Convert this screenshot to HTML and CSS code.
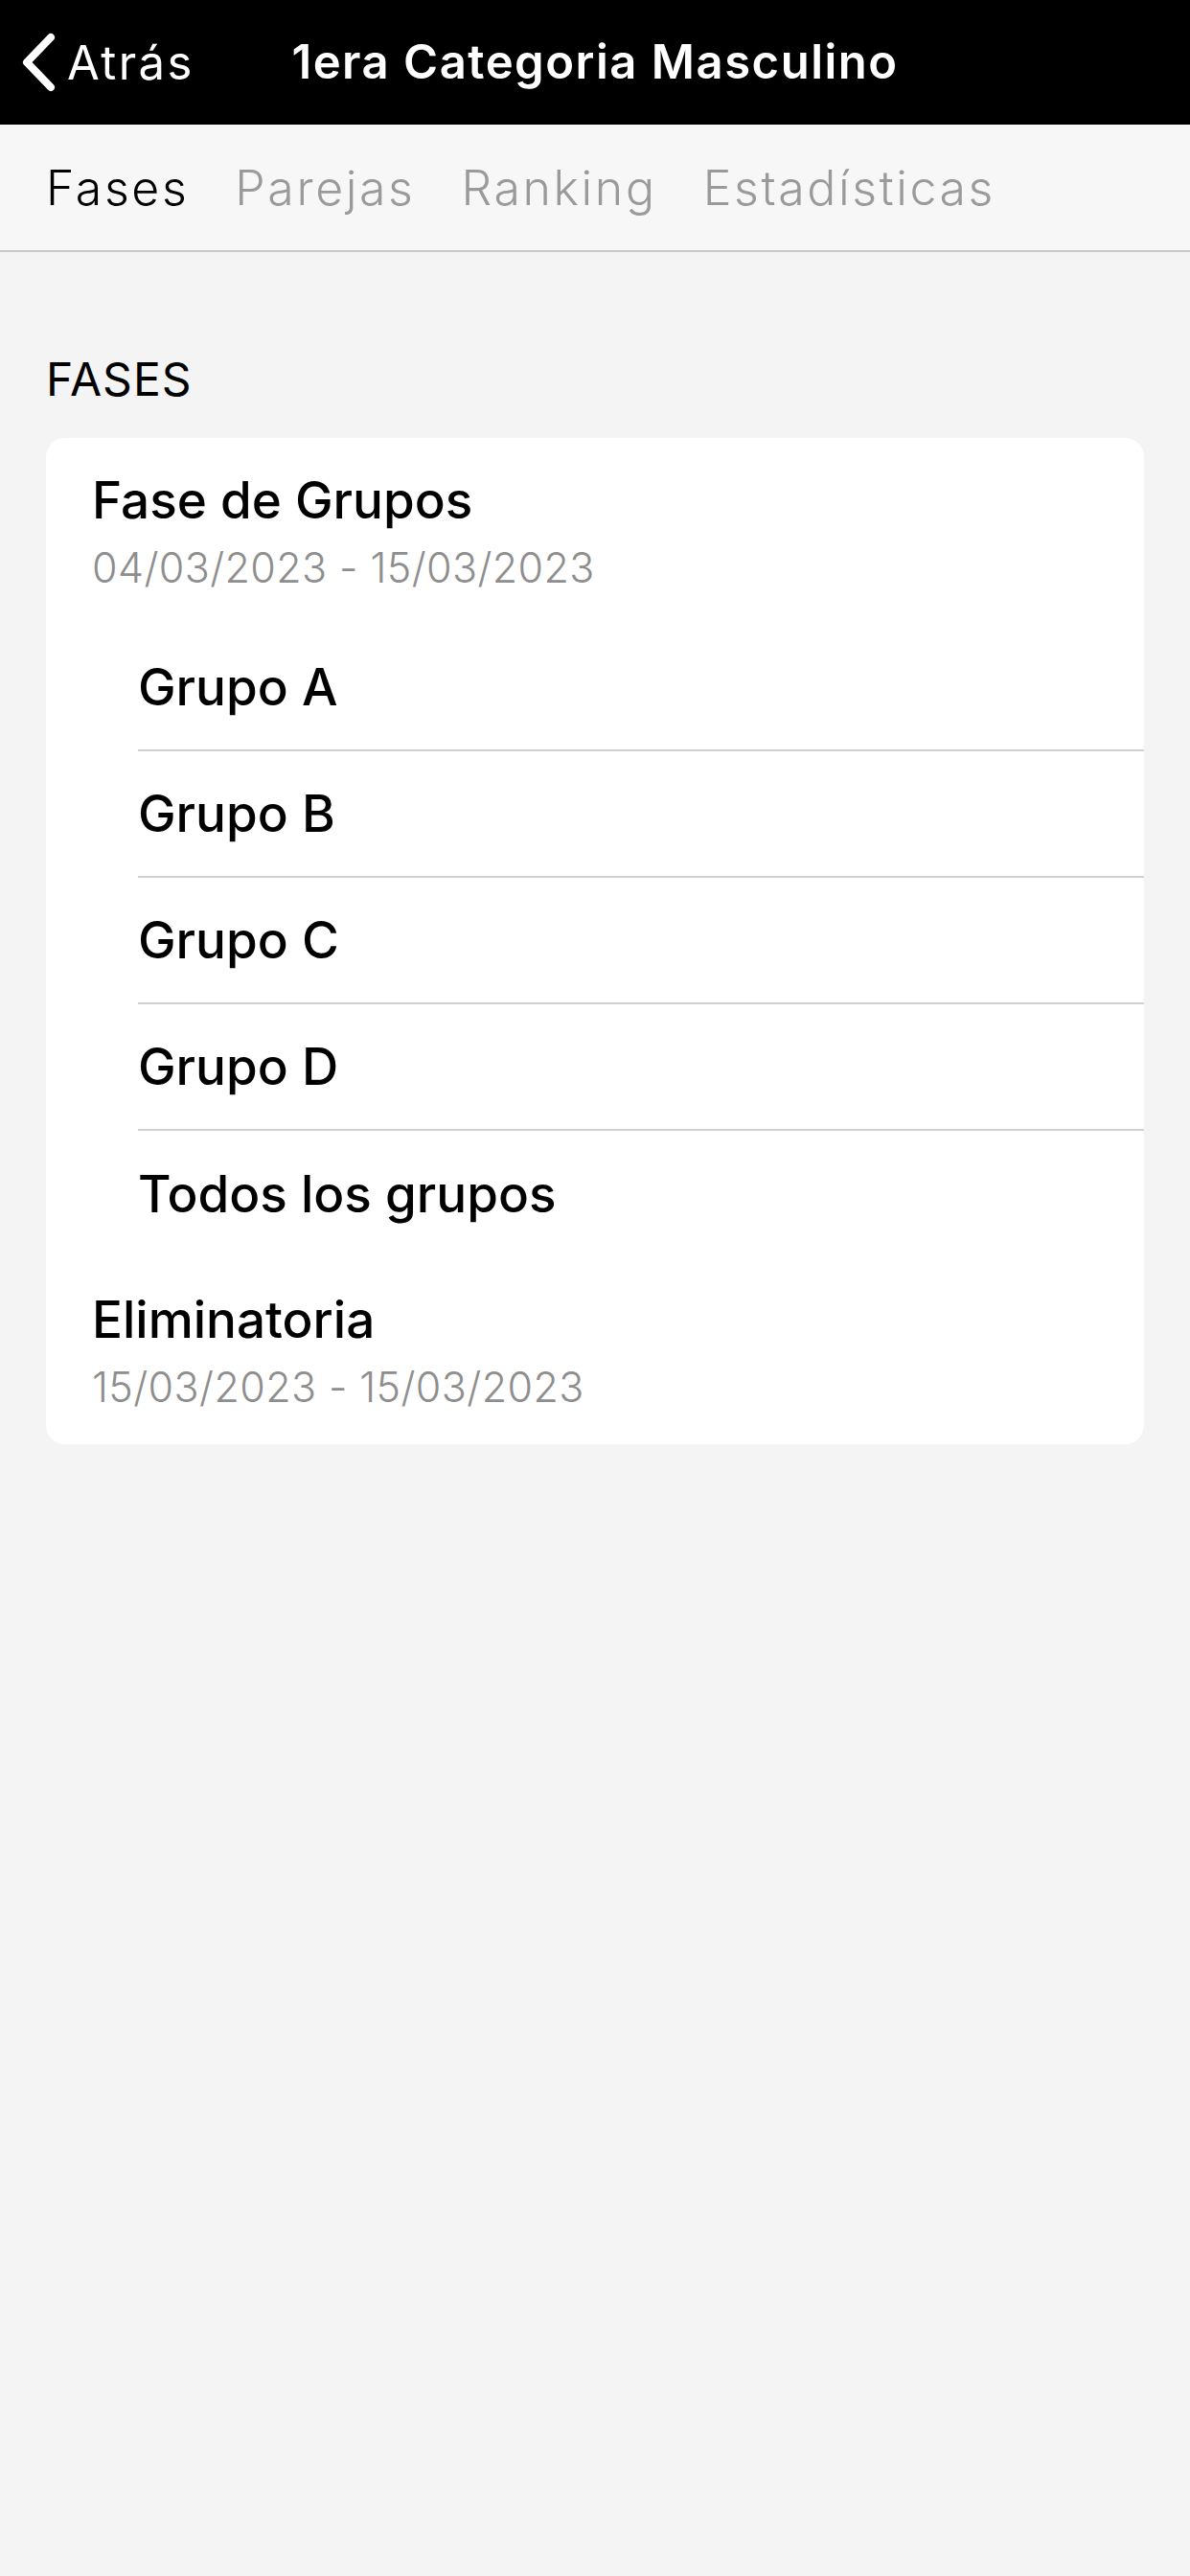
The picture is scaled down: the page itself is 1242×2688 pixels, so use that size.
FILE: index.html
```html
<!DOCTYPE html>
<html lang="es">
<head>
  <meta charset="UTF-8" />
  <meta name="viewport" content="width=device-width, initial-scale=1.0"/>
  <title>1era Categoria Masculino</title>
  <link rel="stylesheet" href="styles.css">
</head>
<body>

  <header class="nav-bar">
    <a class="back-btn" href="#">
      <svg class="chevron" width="36" height="62" viewBox="0 0 36 62">
        <path d="M31 5 L6 31 L31 57" fill="none" stroke="#fff" stroke-width="8" stroke-linecap="round" stroke-linejoin="round"/>
      </svg>
      <span>Atrás</span>
    </a>
    <h1 class="nav-title">1era Categoria Masculino</h1>
    <div></div>
  </header>

  <nav class="tabs">
    <span class="tab active">Fases</span>
    <span class="tab">Parejas</span>
    <span class="tab">Ranking</span>
    <span class="tab">Estadísticas</span>
  </nav>

  <main class="content">
    <h2 class="section-label">FASES</h2>

    <div class="card">
      <div class="phase">
        <div class="phase-name">Fase de Grupos</div>
        <div class="phase-dates">04/03/2023 - 15/03/2023</div>
      </div>
      <ul class="group-list">
        <li class="group">Grupo A</li>
        <li class="group">Grupo B</li>
        <li class="group">Grupo C</li>
        <li class="group">Grupo D</li>
        <li class="group">Todos los grupos</li>
      </ul>
      <div class="phase">
        <div class="phase-name">Eliminatoria</div>
        <div class="phase-dates">15/03/2023 - 15/03/2023</div>
      </div>
    </div>
  </main>

</body>
</html>
```

FILE: styles.css
```css
:root {
  --bg-color: #f4f4f4;
  --tab-bg: #f7f7f7;
  --line: #d2d2d2;
  --muted: #8e8e8e;
}

body {
  font-family: 'Inter', 'Noto Sans', sans-serif;
  background-color: var(--bg-color);
  color: #000;
  margin: 0;
  min-height: 2688px;
}

.nav-bar {
  height: 130px;
  background-color: #000;
  display: grid;
  grid-template-columns: 1fr auto 1fr;
  align-items: center;
}

.back-btn {
  display: flex;
  align-items: center;
  color: #fff;
  text-decoration: none;
  font-size: 49px;
  font-weight: 400;
  letter-spacing: 2.4px;
  padding-left: 22px;
}

.chevron {
  margin-right: 12px;
}

.nav-title {
  margin: 0;
  color: #fff;
  font-size: 49px;
  font-weight: 600;
  letter-spacing: 1.5px;
  line-height: 60px;
}

.tabs {
  height: 133px;
  background-color: var(--tab-bg);
  border-bottom: 2px solid #c9c9c9;
  box-sizing: border-box;
  display: flex;
  align-items: center;
  gap: 48px;
  padding: 0 48px;
}

.tab {
  font-size: 50px;
  font-weight: 300;
  letter-spacing: 2.6px;
  color: #9a9a9a;
}

.tab.active {
  color: #000;
}

.content {
  padding: 0 48px;
}

.section-label {
  margin: 0;
  padding-top: 103px;
  font-size: 48px;
  font-weight: 400;
  letter-spacing: 1px;
  line-height: 60px;
  margin-bottom: 31px;
}

.card {
  background-color: #fff;
  border-radius: 20px;
  overflow: hidden;
}

.phase {
  padding: 30px 48px 25px;
}

.phase-name {
  font-size: 53px;
  font-weight: 500;
  line-height: 70px;
}

.phase-dates {
  font-size: 43px;
  font-weight: 300;
  letter-spacing: 0.4px;
  color: var(--muted);
  line-height: 70px;
}

.group-list {
  list-style: none;
  margin: 0 0 0 96px;
  padding: 0;
}

.group {
  height: 132px;
  box-sizing: border-box;
  display: flex;
  align-items: center;
  font-size: 53px;
  font-weight: 500;
  border-bottom: 2px solid var(--line);
}

.group:last-child {
  border-bottom: none;
}
```
